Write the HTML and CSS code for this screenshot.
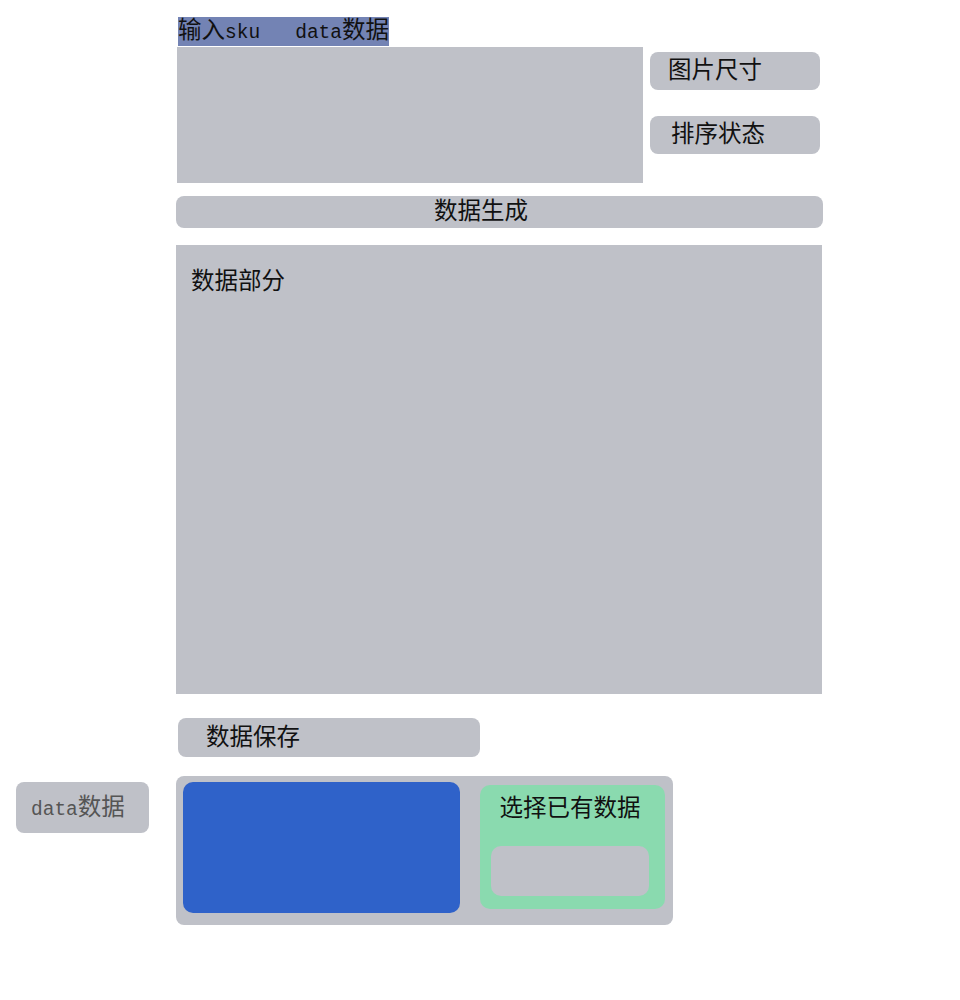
FILE: index.html
```html
<!DOCTYPE html>
<html lang="zh-CN">
<head>
<meta charset="UTF-8">
<title>数据生成</title>
<link rel="stylesheet" href="styles.css">
</head>
<body>

<div class="main">
  <!-- 输入区 -->
  <div class="title">输入<span class="en">sku&nbsp;&nbsp;&nbsp;data</span>数据</div>
  <div class="input-row">
    <div class="input-box"></div>
    <div class="options">
      <div class="opt opt-size">图片尺寸</div>
      <div class="opt opt-sort">排序状态</div>
    </div>
  </div>

  <div class="btn-gen">数据生成</div>

  <!-- 数据部分 -->
  <div class="data-part">数据部分</div>

  <div class="btn-save">数据保存</div>
</div>

<div class="bottom">
  <div class="side-btn"><span class="en">data</span>数据</div>
  <div class="panel">
    <div class="blue-box"></div>
    <div class="green-box">
      <div class="green-title">选择已有数据</div>
      <div class="green-inner"></div>
    </div>
  </div>
</div>

</body>
</html>
```

FILE: styles.css
```css
body {
  margin: 0;
  padding-top: 17px;
  font-family: "Liberation Mono", "Noto Sans CJK SC", monospace;
  font-size: 23.5px;
  color: #111;
  background: #fff;
}

.en {
  font-size: 19.5px;
}

.main {
  margin-left: 176px;
  width: 647px;
}

.title {
  display: inline-block;
  margin-left: 2px;
  height: 29px;
  line-height: 29px;
  background: #7383b4;
  white-space: nowrap;
}

.input-row {
  display: flex;
  margin-top: 1px;
}

.input-box {
  width: 466px;
  height: 136px;
  margin-left: 1px;
  background: #bfc1c8;
}

.options {
  display: flex;
  flex-direction: column;
  gap: 26px;
  margin-left: 7px;
  padding-top: 5px;
}

.opt {
  width: 170px;
  height: 38px;
  line-height: 40px;
  background: #bfc1c8;
  border-radius: 8px;
  box-sizing: border-box;
}

.opt-size { padding-left: 18px; }
.opt-sort { padding-left: 21px; }

.btn-gen {
  margin-top: 13px;
  height: 32px;
  line-height: 34px;
  text-align: center;
  padding-right: 37px;
  background: #bfc1c8;
  border-radius: 8px;
}

.data-part {
  margin-top: 17px;
  width: 646px;
  height: 449px;
  box-sizing: border-box;
  padding: 17px 15px;
  background: #bfc1c8;
}

.btn-save {
  margin: 24px 0 0 2px;
  width: 302px;
  height: 39px;
  line-height: 41px;
  box-sizing: border-box;
  padding-left: 28px;
  background: #bfc1c8;
  border-radius: 8px;
}

.bottom {
  display: flex;
  align-items: flex-start;
  gap: 27px;
  margin: 19px 0 0 16px;
}

.side-btn {
  margin-top: 6px;
  width: 133px;
  height: 51px;
  line-height: 53px;
  box-sizing: border-box;
  padding-left: 15px;
  color: #555;
  background: #bfc1c8;
  border-radius: 8px;
}

.panel {
  display: flex;
  align-items: flex-start;
  gap: 20px;
  width: 497px;
  height: 149px;
  box-sizing: border-box;
  padding: 6px 7px;
  background: #bfc1c8;
  border-radius: 8px;
}

.blue-box {
  width: 277px;
  height: 131px;
  background: #2f62c9;
  border-radius: 10px;
}

.green-box {
  margin-top: 3px;
  width: 185px;
  height: 124px;
  box-sizing: border-box;
  padding: 10px 16px 0 11px;
  background: #8adaaf;
  border-radius: 10px;
}

.green-title {
  text-align: center;
  height: 30px;
  line-height: 30px;
}

.green-inner {
  margin-top: 21px;
  height: 50px;
  background: #bfc1c8;
  border-radius: 10px;
}
```
